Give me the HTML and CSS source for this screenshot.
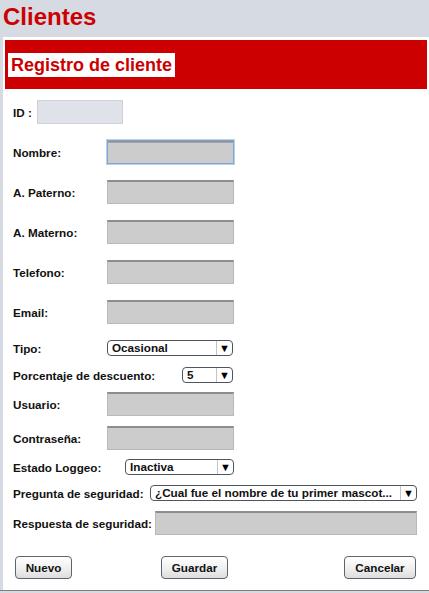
FILE: index.html
```html
<!DOCTYPE html>
<html>

<head>
    <title>Clientes</title>
    <link rel="stylesheet" href="styles.css">
</head>

<body>
    <h1 class="page-title">Clientes</h1>

    <div class="panel">
        <div class="panel-header">
            <h2>Registro de cliente</h2>
        </div>

        <div class="form">
            <div class="row row-md">
                <label class="lbl lbl-id">ID :</label>
                <input class="field field-id" type="text" disabled>
            </div>
            <div class="row">
                <label class="lbl">Nombre:</label>
                <input class="field focused" type="text">
            </div>
            <div class="row">
                <label class="lbl">A. Paterno:</label>
                <input class="field" type="text">
            </div>
            <div class="row">
                <label class="lbl">A. Materno:</label>
                <input class="field" type="text">
            </div>
            <div class="row">
                <label class="lbl">Telefono:</label>
                <input class="field" type="text">
            </div>
            <div class="row">
                <label class="lbl">Email:</label>
                <input class="field" type="text">
            </div>
            <div class="row">
                <label class="lbl">Tipo:</label>
                <div class="combo combo-tipo">
                    <span class="combo-text">Ocasional</span>
                    <span class="combo-arrow">&#9660;</span>
                </div>
            </div>
            <div class="row row-md">
                <label class="lbl lbl-porcentaje">Porcentaje de descuento:</label>
                <div class="combo combo-small">
                    <span class="combo-text">5</span>
                    <span class="combo-arrow">&#9660;</span>
                </div>
            </div>
            <div class="row row-xs">
                <label class="lbl">Usuario:</label>
                <input class="field" type="text">
            </div>
            <div class="row row-sm">
                <label class="lbl">Contraseña:</label>
                <input class="field" type="password">
            </div>
            <div class="row row-xs">
                <label class="lbl lbl-estado">Estado Loggeo:</label>
                <div class="combo combo-estado">
                    <span class="combo-text">Inactiva</span>
                    <span class="combo-arrow">&#9660;</span>
                </div>
            </div>
            <div class="row row-sm">
                <label class="lbl lbl-pregunta">Pregunta de seguridad:</label>
                <div class="combo combo-wide">
                    <span class="combo-text">¿Cual fue el nombre de tu primer mascot...</span>
                    <span class="combo-arrow">&#9660;</span>
                </div>
            </div>
            <div class="row row-sm">
                <label class="lbl lbl-respuesta">Respuesta de seguridad:</label>
                <input class="field field-wide" type="text">
            </div>

            <div class="buttons">
                <button class="btn btn-nuevo">Nuevo</button>
                <button class="btn btn-guardar">Guardar</button>
                <button class="btn btn-cancelar">Cancelar</button>
            </div>
        </div>
    </div>
    <div class="bottom-line"></div>
</body>

</html>
```

FILE: styles.css
```css
body {
    margin: 0;
    background: #d6dae2;
    font-family: "Liberation Sans", Arial, sans-serif;
    overflow: hidden;
}

.page-title {
    margin: 0;
    height: 37px;
    padding-left: 3px;
    font-size: 24px;
    line-height: 34px;
    font-weight: bold;
    color: #cc0000;
}

.panel {
    margin-left: 3px;
    padding: 3px 2px 0 2px;
    height: 550px;
    background: #ffffff;
}

.panel-header {
    height: 49px;
    background: #cc0000;
    display: flex;
    align-items: center;
    padding-left: 3px;
}

.panel-header h2 {
    margin: 0;
    background: #ffffff;
    color: #cc0000;
    font-size: 18px;
    font-weight: bold;
    height: 24px;
    line-height: 25px;
    padding: 0 3px 0 3px;
}

.form {
    display: flex;
    flex-direction: column;
    padding-left: 8px;
}

.row {
    display: flex;
    align-items: center;
    margin-top: 16px;
}

.row-md {
    margin-top: 11px;
}

.row-sm {
    margin-top: 10px;
}

.row-xs {
    margin-top: 9px;
}

.lbl {
    width: 94px;
    font-size: 11.7px;
    font-weight: bold;
    color: #111111;
}

.lbl-id {
    width: 24px;
}

.lbl-porcentaje {
    width: 169px;
}

.lbl-estado {
    width: 112px;
}

.lbl-pregunta {
    width: 137px;
}

.lbl-respuesta {
    width: 142px;
}

.field {
    box-sizing: border-box;
    width: 127px;
    height: 24px;
    margin: 0;
    padding: 0 3px;
    background: #cccccc;
    border: 1px solid #b9b9b9;
    border-top: 2px solid #8d8d8d;
    outline: none;
}

.field-id {
    width: 86px;
    background: #dfe2e8;
    border: 1px solid #cfd2d8;
}

.field.focused {
    border: 1px solid #7ea6d3;
    box-shadow: 0 0 0 1px #b9d0ea, inset 0 1px 0 #8d8d8d, inset 0 2px 0 #a8a8a8;
}

.field-wide {
    width: 262px;
}

.combo {
    box-sizing: border-box;
    display: flex;
    height: 16px;
    border: 1px solid #4d5560;
    border-radius: 4px;
    background: #ffffff;
    font-size: 11.7px;
    font-weight: bold;
    color: #111111;
}

.combo-text {
    flex: 1;
    padding-left: 4px;
    line-height: 14px;
    white-space: nowrap;
    overflow: hidden;
}

.combo-arrow {
    width: 15px;
    border-left: 1px solid #c4c4c4;
    font-size: 11px;
    line-height: 14px;
    text-align: center;
    color: #000000;
}

.combo-tipo {
    width: 126px;
}

.combo-small {
    width: 51px;
}

.combo-estado {
    width: 109px;
}

.combo-wide {
    width: 267px;
}

.buttons {
    display: flex;
    margin-top: 21px;
    padding-left: 2px;
    padding-right: 11px;
}

.btn {
    height: 23px;
    margin: 0;
    padding: 0;
    border: 1px solid #5d646d;
    border-radius: 4px;
    background: linear-gradient(#ffffff, #eeeeee 60%, #dcdcdc);
    font-family: "Liberation Sans", Arial, sans-serif;
    font-size: 11.7px;
    font-weight: bold;
    color: #111111;
}

.btn-nuevo {
    width: 57px;
}

.btn-guardar {
    width: 67px;
    margin-left: 89px;
}

.btn-cancelar {
    width: 72px;
    margin-left: auto;
}

.bottom-line {
    height: 1px;
    background: #7d7d7d;
}
```
